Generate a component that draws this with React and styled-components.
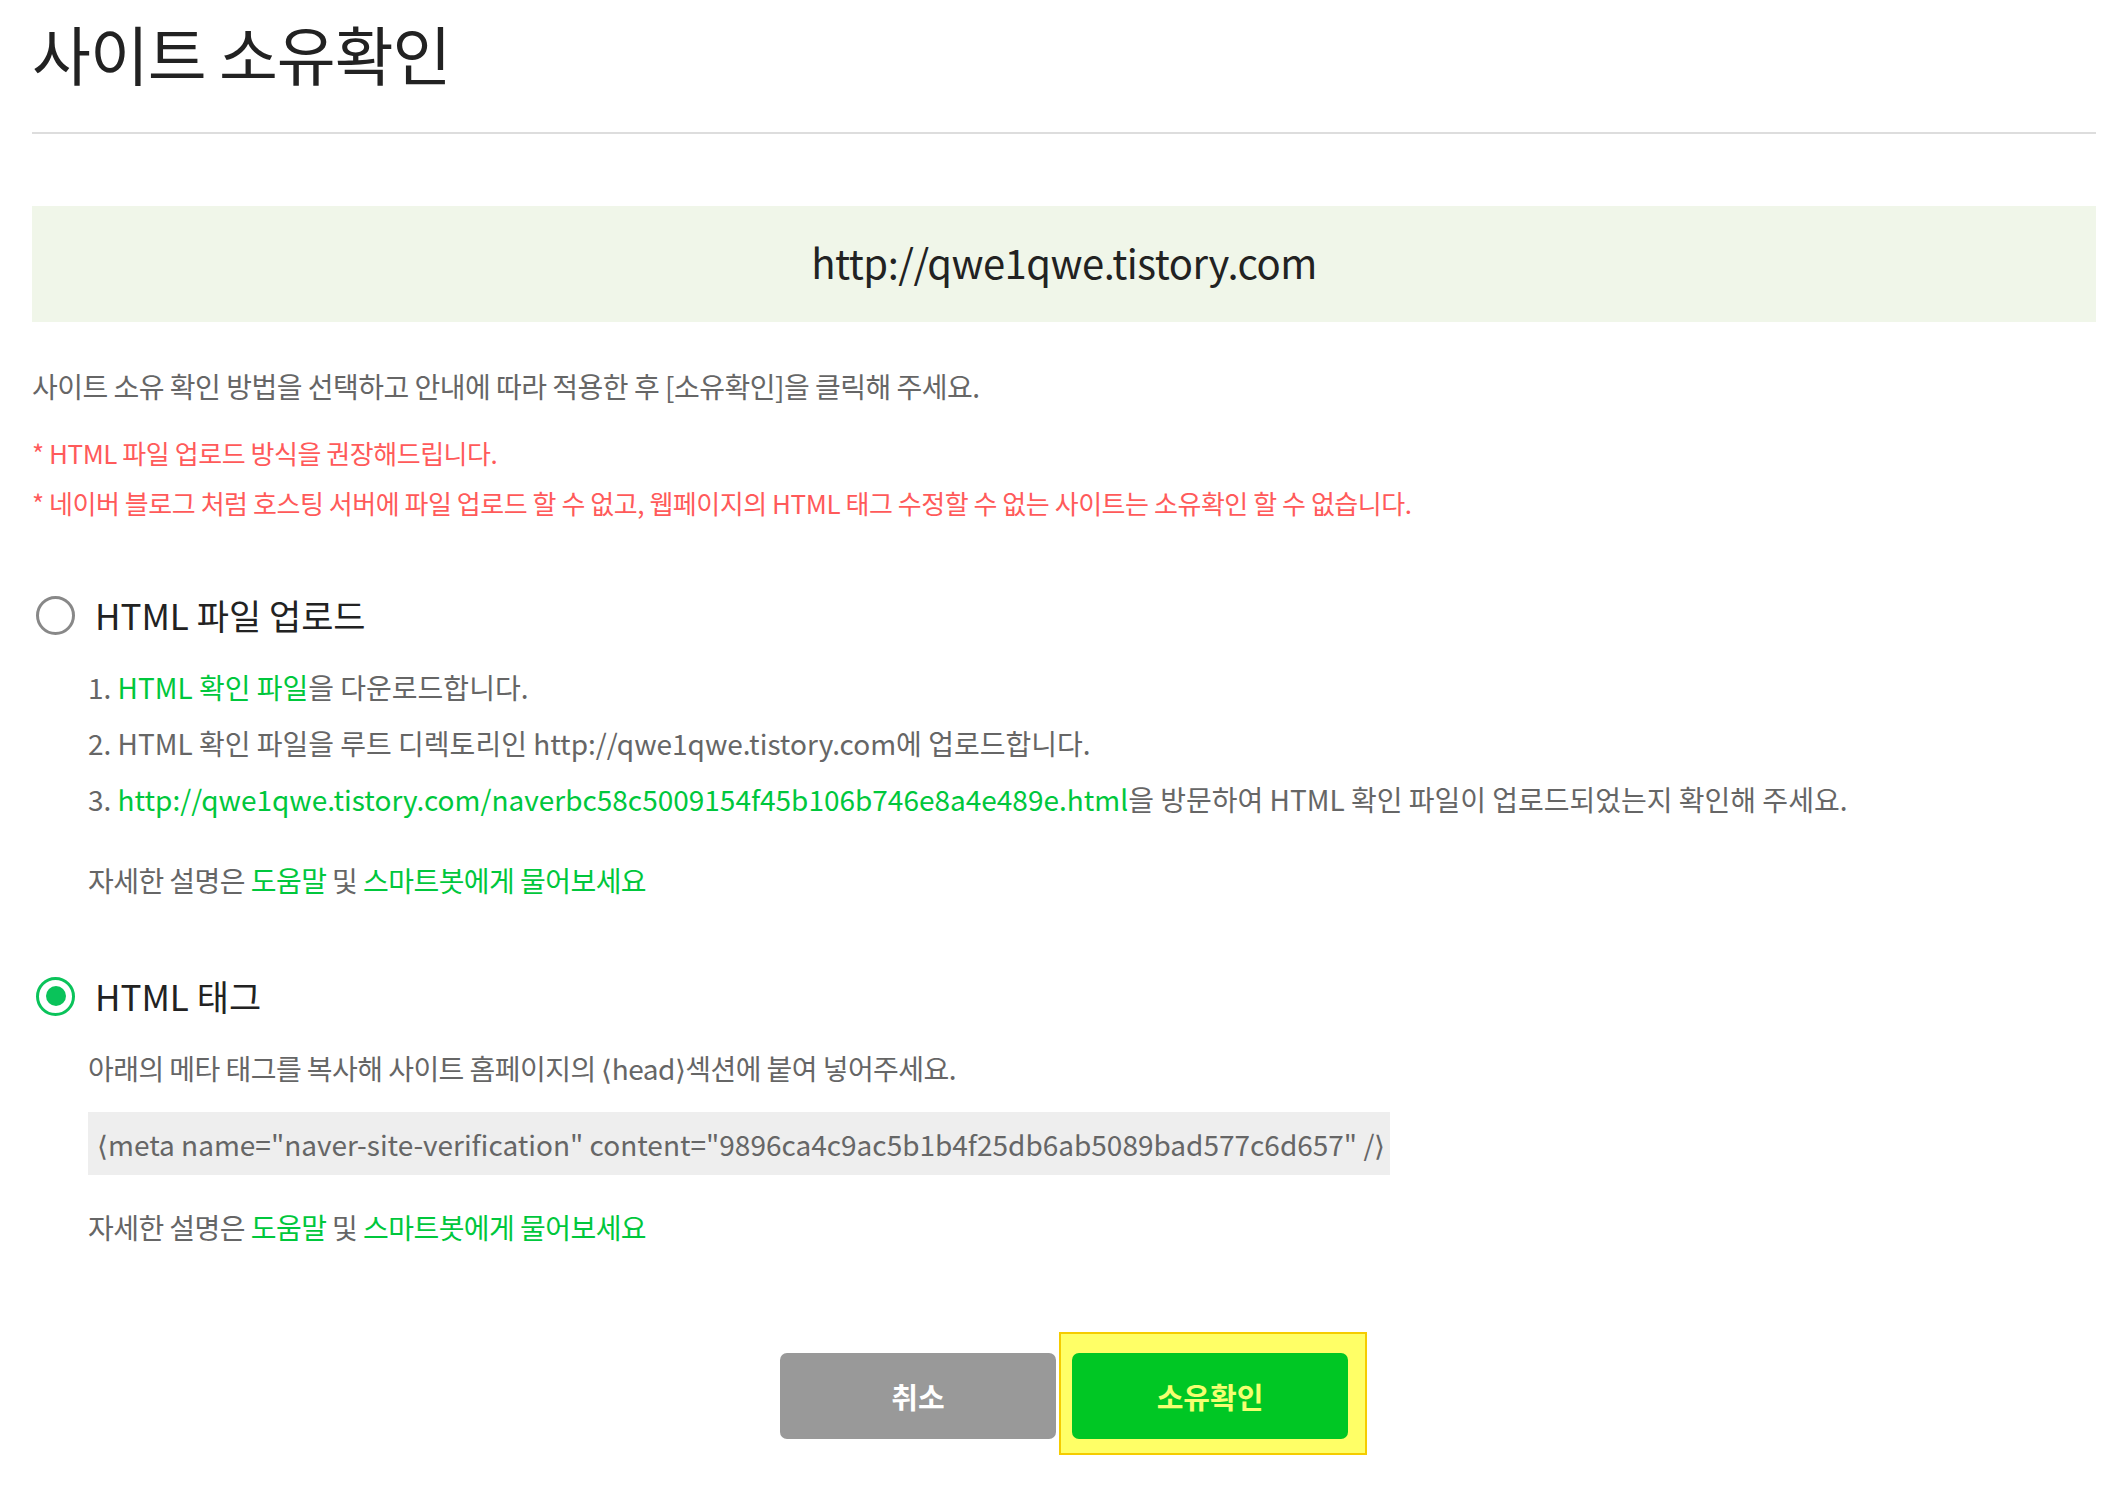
import React from "react";
import styled, { createGlobalStyle } from "styled-components";

const GlobalStyle = createGlobalStyle`
  html, body {
    margin: 0;
    padding: 0;
    background: #fff;
  }
  body {
    font-family: "Noto Sans CJK KR", "Noto Sans", sans-serif;
    color: #222;
  }
`;

const Page = styled.div`
  padding: 0 17px 40px 32px;
`;

const Title = styled.h1`
  margin: 0;
  padding-top: 6px;
  font-size: 64px;
  font-weight: 400;
  line-height: 92px;
  color: #222;
  letter-spacing: -1px;
  border-bottom: 2px solid #ddd;
  padding-bottom: 34px;
`;

const SiteBox = styled.div`
  margin-top: 72px;
  height: 116px;
  padding-bottom: 4px;
  box-sizing: border-box;
  background: #f0f6e9;
  display: flex;
  align-items: center;
  justify-content: center;
  font-size: 40px;
  color: #222;
  letter-spacing: -0.5px;
`;

const Desc = styled.p`
  margin: 44px 0 0;
  font-size: 28px;
  line-height: 40px;
  letter-spacing: -0.5px;
  color: #666;
`;

const Notice = styled.p`
  margin: ${(p) => p.$gap || "0"} 0 0;
  font-size: 26px;
  line-height: 36px;
  letter-spacing: -0.45px;
  color: #ff5a5a;
`;

const Section = styled.section`
  margin-top: ${(p) => p.$top || "0"};
`;

const RadioRow = styled.label`
  display: flex;
  align-items: center;
  gap: 20px;
  margin-left: 4px;
  font-size: 35px;
  line-height: 50px;
  color: #222;
  cursor: pointer;
`;

const Radio = styled.span`
  box-sizing: border-box;
  flex: none;
  width: 39px;
  height: 39px;
  border-radius: 50%;
  border: 3px solid ${(p) => (p.$checked ? "#0ac35a" : "#888")};
  display: flex;
  align-items: center;
  justify-content: center;
  &::after {
    content: "";
    display: ${(p) => (p.$checked ? "block" : "none")};
    width: 20px;
    height: 20px;
    border-radius: 50%;
    background: #0ac35a;
  }
`;

const Body = styled.div`
  padding-left: 56px;
`;

const Steps = styled.ol`
  margin: 19px 0 0;
  padding: 0;
  list-style: none;
`;

const Step = styled.li`
  font-size: 28px;
  line-height: 56px;
  letter-spacing: 0;
  color: #666;
`;

const Line = styled.p`
  margin: ${(p) => p.$top || "0"} 0 0;
  font-size: 28px;
  line-height: 40px;
  letter-spacing: -0.55px;
  color: #666;
`;

const Link = styled.a`
  color: #00c73c;
  text-decoration: none;
`;

const CodeBox = styled.div`
  margin-top: 24px;
  width: 1302px;
  height: 63px;
  box-sizing: border-box;
  padding-left: 9px;
  display: flex;
  align-items: center;
  background: #eee;
  font-size: 28px;
  letter-spacing: 0;
  color: #666;
  white-space: nowrap;
`;

const Buttons = styled.div`
  margin-top: 106px;
  display: flex;
  justify-content: center;
  gap: 16px;
`;

const Button = styled.button`
  width: 276px;
  height: 86px;
  border: none;
  border-radius: 7px;
  background: ${(p) => (p.$primary ? "#00c724" : "#999")};
  color: ${(p) => (p.$primary ? "#f4ff70" : "#fff")};
  font-family: inherit;
  font-size: 29px;
  font-weight: 700;
  cursor: pointer;
`;

const Highlight = styled.span`
  position: relative;
  display: inline-flex;
  isolation: isolate;
  &::before {
    content: "";
    position: absolute;
    left: -13px;
    right: -19px;
    top: -21px;
    bottom: -16px;
    background: #ffff66;
    border: 2px solid #f5cc00;
    z-index: -1;
  }
`;

const siteUrl = "http://qwe1qwe.tistory.com";
const fileUrl = siteUrl + "/naverbc58c5009154f45b106b746e8a4e489e.html";

function Help({ top }) {
  return (
    <Line $top={top}>
      자세한 설명은 <Link href="#">도움말</Link> 및{" "}
      <Link href="#">스마트봇에게 물어보세요</Link>
    </Line>
  );
}

export default function App() {
  return (
    <Page>
      <GlobalStyle />
      <Title>사이트 소유확인</Title>

      <SiteBox>{siteUrl}</SiteBox>

      <Desc>
        사이트 소유 확인 방법을 선택하고 안내에 따라 적용한 후 [소유확인]을 클릭해 주세요.
      </Desc>
      <Notice $gap="29px">* HTML 파일 업로드 방식을 권장해드립니다.</Notice>
      <Notice $gap="14px">
        * 네이버 블로그 처럼 호스팅 서버에 파일 업로드 할 수 없고, 웹페이지의 HTML 태그 수정할 수 없는 사이트는 소유확인 할 수 없습니다.
      </Notice>

      <Section $top="69px">
        <RadioRow>
          <Radio />
          HTML 파일 업로드
        </RadioRow>
        <Body>
          <Steps>
            <Step>
              1. <Link href="#">HTML 확인 파일</Link>을 다운로드합니다.
            </Step>
            <Step>2. HTML 확인 파일을 루트 디렉토리인 {siteUrl}에 업로드합니다.</Step>
            <Step>
              3. <Link href="#">{fileUrl}</Link>을 방문하여 HTML 확인 파일이 업로드되었는지 확인해 주세요.
            </Step>
          </Steps>
          <Help top="33px" />
        </Body>
      </Section>

      <Section $top="71px">
        <RadioRow>
          <Radio $checked />
          HTML 태그
        </RadioRow>
        <Body>
          <Line $top="27px">아래의 메타 태그를 복사해 사이트 홈페이지의 ⟨head⟩섹션에 붙여 넣어주세요.</Line>
          <CodeBox>
            ⟨meta name="naver-site-verification" content="9896ca4c9ac5b1b4f25db6ab5089bad577c6d657" /⟩
          </CodeBox>
          <Help top="32px" />
        </Body>
      </Section>

      <Buttons>
        <Button>취소</Button>
        <Highlight>
          <Button $primary>소유확인</Button>
        </Highlight>
      </Buttons>
    </Page>
  );
}
